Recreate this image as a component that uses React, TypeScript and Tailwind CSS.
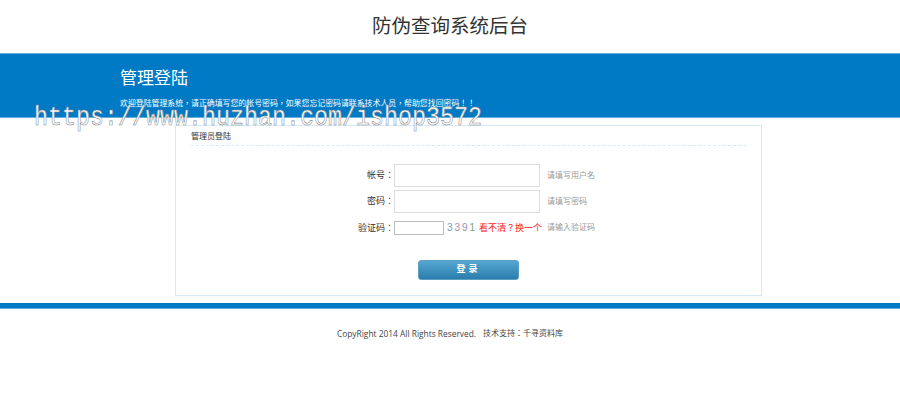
const cjk = "font-['Liberation_Sans','Noto_Sans_CJK_TC',sans-serif]";
const cjkSc = "font-['Liberation_Sans','Noto_Sans_CJK_SC',sans-serif]";

const Row = ({ label, hint, children }: { label: string; hint: string; children: React.ReactNode }) => (
  <div className="flex items-center">
    <label className="w-[218px] text-right text-[9px] leading-none text-[#333]">{label}：</label>
    {children}
    <span className="ml-[7px] text-[8px] leading-none text-[#999]">{hint}</span>
  </div>
);

export default function App() {
  return (
    <div className={`relative h-[401px] w-[900px] overflow-hidden bg-white ${cjk}`}>
      <h1 className={`flex h-[53px] items-center justify-center text-[19.5px] font-normal text-[#333] ${cjkSc}`}>防伪查询系统后台</h1>

      <div className="h-[65px] border-y border-y-[#5faee0] bg-[#007ac5] pl-[120px] pt-[15px] text-white">
        <h2 className={`text-[17px] leading-5 font-normal ${cjkSc}`}>管理登陆</h2>
        <p className="mt-[9px] text-[7.9px] leading-[12px]">欢迎登陆管理系统，请正确填写您的帐号密码，如果您忘记密码请联系技术人员，帮助您找回密码！！</p>
      </div>

      <main className="mx-[175px] mt-[7px] h-[171px] w-[587px] border border-[#d5eaf7] px-[15px]">
        <div className="flex h-[20px] items-center border-b border-dashed border-b-[#d5eaf7] pt-[3px] text-[8px] text-[#333]">管理员登陆</div>
        <div className="-ml-[15px] mt-[18px] flex flex-col">
          <Row label="帐号" hint="请填写用户名">
            <input className="h-[23px] w-[146px] border border-[#ddd] bg-white" />
          </Row>
          <div className="mt-[3px]">
            <Row label="密码" hint="请填写密码">
              <input type="password" className="h-[23px] w-[146px] border border-[#ddd] bg-white" />
            </Row>
          </div>
          <div className="mt-[8px]">
            <Row label="验证码" hint="请输入验证码">
              <input className="h-[14px] w-[50px] border border-[#bbb] bg-white" />
              <span className="ml-[3px] flex w-[28px] justify-between font-['Liberation_Sans',sans-serif] text-[10px] leading-none">
                <span className="text-[#7a9cc0]">3</span>
                <span className="text-[#b08ca8]">3</span>
                <span className="text-[#9a8fb5]">9</span>
                <span className="text-[#6fa37a]">1</span>
              </span>
              <a className="-mr-[2px] ml-[4px] text-[9px] leading-none text-[#f22]">看不清？换一个</a>
            </Row>
          </div>
          <button className="ml-[242px] mt-[25px] h-[20px] w-[101px] rounded-[3px] border border-[#5b9fc5] bg-gradient-to-b from-[#55a6d2] to-[#2a7dab] text-[9px] font-bold tracking-[3px] text-white">登录</button>
        </div>
      </main>

      <div className="mt-[7px] h-[6px] border-b border-b-[#5faee0] bg-[#007ac5]" />
      <footer className="mt-[19px] flex justify-center gap-[7px] text-[#444] leading-[12px]">
        <span className="font-['Open_Sans',sans-serif] text-[8.4px]">CopyRight 2014 All Rights Reserved.</span>
        <span className="text-[8px]">技术支持：千寻资料库</span>
      </footer>

      <div className="absolute left-[34px] top-[102px] origin-left scale-x-[0.833] whitespace-nowrap font-['Liberation_Mono',monospace] text-[28px] leading-8 text-white [-webkit-text-stroke:0.6px_#8a8a8a]">https://www.huzhan.com/ishop3572</div>
    </div>
  );
}
